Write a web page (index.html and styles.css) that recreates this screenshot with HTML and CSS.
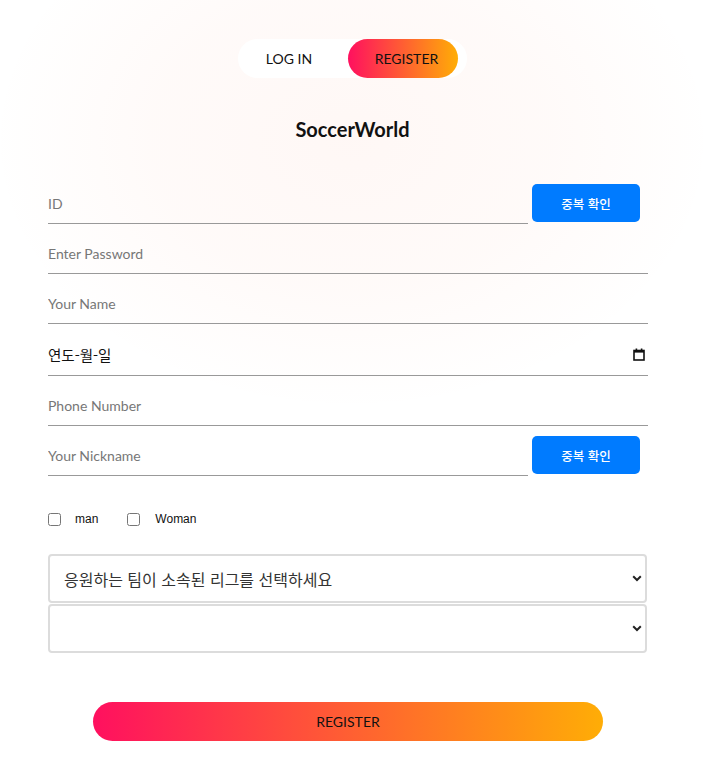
FILE: index.html
```html
<!DOCTYPE html>
<html lang="ko">
<head>
<meta charset="utf-8">
<title>SoccerWorld</title>
<link rel="stylesheet" href="styles.css">
</head>
<body>
<div class="page">
  <div class="toggle-box">
    <button class="toggle-btn login" type="button">LOG IN</button>
    <button class="toggle-btn register" type="button">REGISTER</button>
  </div>
  <h1 class="title">SoccerWorld</h1>
  <form class="form">
    <div class="row">
      <input class="field short" type="text" placeholder="ID">
      <button class="check-btn" type="button">중복 확인</button>
    </div>
    <div class="row">
      <input class="field" type="password" placeholder="Enter Password">
    </div>
    <div class="row">
      <input class="field" type="text" placeholder="Your Name">
    </div>
    <div class="row date-row">
      <div class="field date-field">
        <span class="date-text">연도-월-일</span>
        <svg class="cal-icon" width="12" height="13" viewBox="0 0 12 13" aria-hidden="true">
          <rect x="1" y="2.5" width="10" height="9.5" fill="none" stroke="#111" stroke-width="1.6"/>
          <rect x="1" y="2" width="10" height="2.6" fill="#111"/>
          <rect x="2.6" y="0.5" width="1.6" height="2" fill="#111"/>
          <rect x="7.8" y="0.5" width="1.6" height="2" fill="#111"/>
        </svg>
      </div>
    </div>
    <div class="row">
      <input class="field" type="text" placeholder="Phone Number">
    </div>
    <div class="row">
      <input class="field short" type="text" placeholder="Your Nickname">
      <button class="check-btn" type="button">중복 확인</button>
    </div>
    <div class="gender">
      <label class="gender-opt"><input type="checkbox" class="cb"><span>man</span></label>
      <label class="gender-opt"><input type="checkbox" class="cb"><span>Woman</span></label>
    </div>
    <div class="selects">
      <div class="select-wrap">
        <select class="select"><option>응원하는 팀이 소속된 리그를 선택하세요</option></select>
        <svg class="chev" width="10" height="7" viewBox="0 0 10 7" aria-hidden="true"><path d="M1.2 1.3 L5 5 L8.8 1.3" fill="none" stroke="#222" stroke-width="2"/></svg>
      </div>
      <div class="select-wrap">
        <select class="select"><option></option></select>
        <svg class="chev" width="10" height="7" viewBox="0 0 10 7" aria-hidden="true"><path d="M1.2 1.3 L5 5 L8.8 1.3" fill="none" stroke="#222" stroke-width="2"/></svg>
      </div>
    </div>
    <button class="submit-btn" type="button">REGISTER</button>
  </form>
</div>
</body>
</html>
```
FILE: styles.css
```css
* { box-sizing: border-box; }
html, body { margin: 0; padding: 0; }
body {
  width: 703px;
  min-height: 781px;
  font-family: "Lato", "Noto Sans CJK KR", sans-serif;
  background:
    radial-gradient(ellipse 360px 270px at 352px 140px, rgba(255, 120, 80, 0.055) 0%, rgba(255, 120, 80, 0.035) 55%, rgba(255, 120, 80, 0) 100%),
    #ffffff;
}
.page {
  padding-top: 39px;
  display: flex;
  flex-direction: column;
}
.toggle-box {
  align-self: flex-start;
  margin-left: 238px;
  width: 229px;
  height: 39px;
  background: #fff;
  border-radius: 20px;
  display: flex;
}
.toggle-btn {
  width: 110px;
  height: 39px;
  border: 0;
  background: transparent;
  font-family: "Lato", sans-serif;
  font-size: 14px;
  color: #111;
  border-radius: 20px;
  padding: 0;
  cursor: pointer;
}
.toggle-btn.login { padding-right: 8px; }
.toggle-btn.register {
  padding-left: 7px;
  background: linear-gradient(to right, #ff105f, #ffad06);
}
.title {
  margin: 39px 0 0 0;
  text-align: center;
  padding-left: 2px;
  font-family: "Lato", sans-serif;
  font-size: 20px;
  font-weight: 700;
  line-height: 24px;
  color: #111;
}
.form {
  margin: 43px 0 0 48px;
  width: 600px;
  display: flex;
  flex-direction: column;
}
.row {
  display: flex;
  align-items: flex-start;
  gap: 4px;
  margin-bottom: 10px;
}
.field {
  flex: 1;
  height: 40px;
  border: 0;
  border-bottom: 1px solid #999;
  background: transparent;
  outline: none;
  padding: 0;
  font-family: "Lato", "Noto Sans CJK KR", sans-serif;
  font-size: 14px;
  color: #333;
}
.field::placeholder { color: #777; }
.field.short { flex: 0 0 480px; }
.check-btn {
  width: 108px;
  height: 38px;
  border: 0;
  border-radius: 5px;
  background: #007bff;
  color: #fff;
  font-family: "Noto Sans CJK KR", sans-serif;
  font-size: 12.5px;
  font-weight: 500;
  padding: 0;
}
.date-row .date-field {
  height: 42px;
  display: flex;
  align-items: center;
  justify-content: space-between;
  padding-right: 3px;
}
.date-text {
  font-family: "Noto Sans CJK KR", sans-serif;
  font-size: 14.5px;
  color: #111;
}
.gender {
  display: flex;
  align-items: center;
  margin-top: 25px;
  height: 16px;
}
.gender-opt {
  display: flex;
  align-items: center;
  font-family: "Liberation Sans", Arial, sans-serif;
  font-size: 12px;
  color: #111;
}
.gender-opt:first-child { margin-right: 29px; }
.cb {
  width: 13px;
  height: 13px;
  margin: 0 14px 0 0;
}
.gender-opt + .gender-opt .cb { margin-right: 15px; }
.selects {
  margin-top: 27px;
  display: flex;
  flex-direction: column;
  gap: 1px;
}
.select-wrap {
  position: relative;
  width: 599px;
}
.select {
  appearance: none;
  -webkit-appearance: none;
  width: 100%;
  height: 49px;
  border: 2px solid #dcdcdc;
  border-radius: 4px;
  background: #fff;
  padding: 0 30px 0 14px;
  font-family: "Noto Sans CJK KR", sans-serif;
  font-size: 16px;
  color: #333;
  outline: none;
}
.chev {
  position: absolute;
  right: 5px;
  top: 21px;
  pointer-events: none;
}
.submit-btn {
  margin: 49px 0 40px 45px;
  width: 510px;
  height: 39px;
  border: 0;
  border-radius: 20px;
  background: linear-gradient(to right, #ff105f, #ffad06);
  font-family: "Lato", sans-serif;
  font-size: 14px;
  color: #111;
  padding: 0;
}
```
